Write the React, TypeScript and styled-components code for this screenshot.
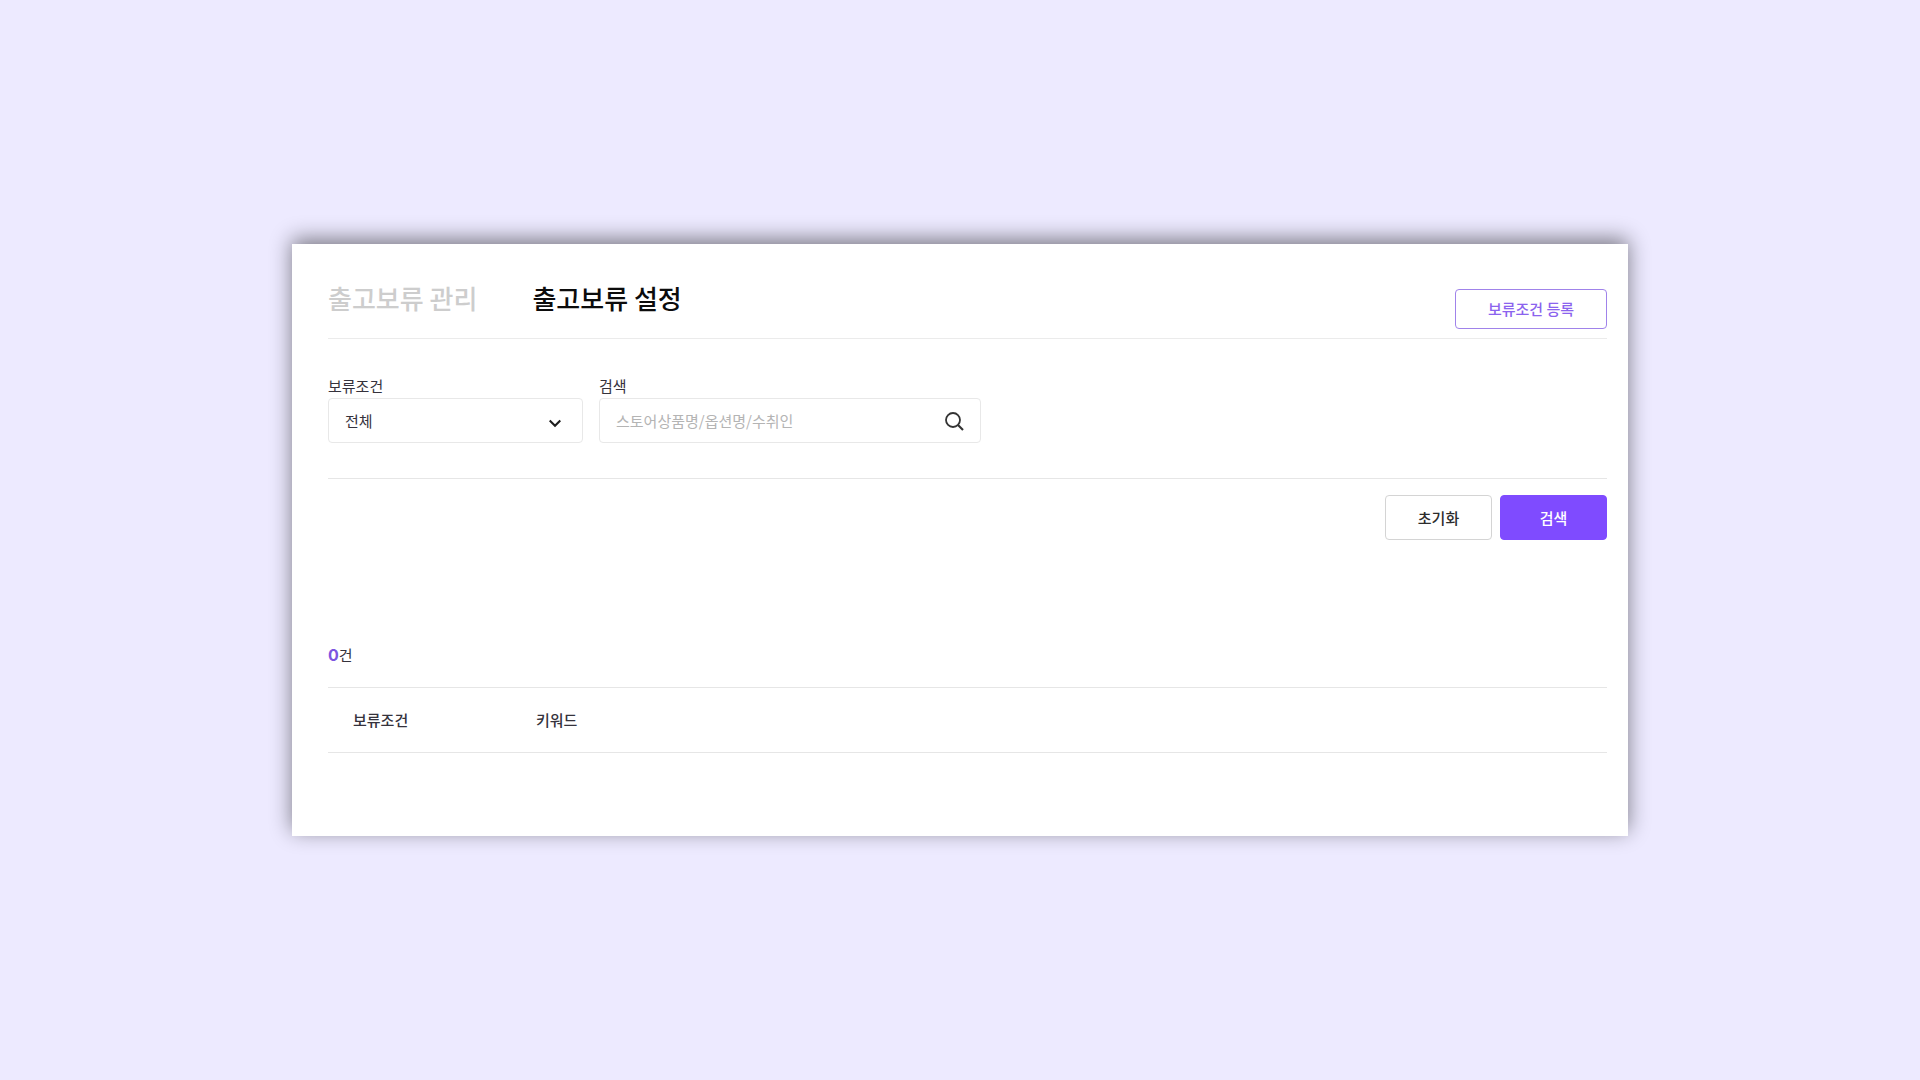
import React, { useState } from "react";
import styled, { createGlobalStyle } from "styled-components";

const GlobalStyle = createGlobalStyle`
  * {
    box-sizing: border-box;
  }
  body {
    margin: 0;
    background: #edeaff;
    color: #35323c;
    font-family: "Noto Sans CJK KR", "Noto Sans", sans-serif;
    font-size: 15px;
    line-height: 24px;
  }
  button, input, select {
    font: inherit;
    color: inherit;
  }
`;

const Page = styled.div`
  display: flex;
  align-items: center;
  justify-content: center;
  min-height: 100vh;
  padding: 24px;
`;

const Card = styled.main`
  width: 100%;
  max-width: 1336px;
  padding: 35px 21px 83px 36px;
  background: #fff;
  box-shadow: 0 -5px 20px rgba(0, 0, 0, 0.48);
`;

const Header = styled.header`
  display: flex;
  justify-content: space-between;
  align-items: flex-end;
  border-bottom: 1px solid #ebebeb;
`;

const Tabs = styled.nav`
  display: flex;
  gap: 55px;
  padding-bottom: 21px;
`;

const Tab = styled.a<{ $active?: boolean }>`
  color: ${({ $active }) => ($active ? "#0c0c0c" : "#cdcdcd")};
  font-size: 26px;
  font-weight: 500;
  line-height: 38px;
  text-decoration: none;
`;

const Button = styled.button<{ $kind?: "primary" | "plain" }>`
  width: 107px;
  height: 45px;
  padding: 0;
  border: 1px solid ${({ $kind }) => ($kind === "primary" ? "#7f4bff" : "#d4d4d4")};
  border-radius: 4px;
  background: ${({ $kind }) => ($kind === "primary" ? "#7f4bff" : "#fff")};
  color: ${({ $kind }) => ($kind === "primary" ? "#fff" : "#2c2c2c")};
  font-weight: 500;
  cursor: pointer;
`;

const OutlineButton = styled(Button)`
  width: 152px;
  height: 40px;
  margin-bottom: 9px;
  border-color: #a083ea;
  color: #8b63ee;
`;

const Filters = styled.div`
  display: flex;
  gap: 16px;
  padding: 35px 0;
  border-bottom: 1px solid #e6e6e6;
`;

const Field = styled.div<{ $width: number }>`
  display: flex;
  flex-direction: column;
  width: ${({ $width }) => $width}px;
`;

const SelectBox = styled.div`
  position: relative;
  height: 45px;

  svg {
    position: absolute;
    top: 21px;
    right: 22px;
    pointer-events: none;
  }
`;

const Select = styled.select`
  width: 100%;
  height: 100%;
  padding: 0 16px;
  border: 1px solid #e8e8e8;
  border-radius: 4px;
  background: #fff;
  appearance: none;
`;

const SearchBox = styled.div`
  display: flex;
  align-items: center;
  height: 45px;
  padding: 0 16px;
  border: 1px solid #e8e8e8;
  border-radius: 4px;
`;

const SearchInput = styled.input`
  flex: 1;
  min-width: 0;
  padding: 0;
  border: 0;
  outline: 0;
  background: transparent;

  &::placeholder {
    color: #b4b4b4;
    opacity: 1;
  }
`;

const IconButton = styled.button`
  display: flex;
  padding: 0;
  border: 0;
  background: none;
  cursor: pointer;
`;

const Actions = styled.div`
  display: flex;
  justify-content: flex-end;
  gap: 8px;
  padding-top: 16px;
`;

const Count = styled.p`
  margin: 103px 0 20px;

  strong {
    color: #7c55e0;
    font-family: Inter, "Noto Sans", sans-serif;
    font-size: 16px;
    font-weight: 700;
  }
`;

const Table = styled.table`
  width: 100%;
  border-collapse: collapse;
  table-layout: fixed;
  border-top: 1px solid #e6e6e6;
  border-bottom: 1px solid #e6e6e6;
`;

const Th = styled.th<{ $width?: number }>`
  width: ${({ $width }) => ($width ? `${$width}px` : "auto")};
  padding: 20px 0 20px 25px;
  font-weight: 500;
  text-align: left;
`;

function ChevronIcon() {
  return (
    <svg width="12" height="9" viewBox="0 0 12 9" fill="none" aria-hidden="true">
      <path d="M.7 1.5 6 6.8 11.3 1.5" stroke="#1e1e1e" strokeWidth="2.1" />
    </svg>
  );
}

function SearchIcon() {
  return (
    <svg width="20" height="20" viewBox="0 0 20 20" fill="none" aria-hidden="true">
      <circle cx="9" cy="9" r="7" stroke="#333" strokeWidth="1.8" />
      <path d="m14 14 5 5" stroke="#333" strokeWidth="2.1" />
    </svg>
  );
}

export default function App() {
  const [keyword, setKeyword] = useState("");

  return (
    <>
      <GlobalStyle />
      <Page>
        <Card>
          <Header>
            <Tabs>
              <Tab href="#manage">출고보류 관리</Tab>
              <Tab href="#settings" $active aria-current="page">
                출고보류 설정
              </Tab>
            </Tabs>
            <OutlineButton type="button">보류조건 등록</OutlineButton>
          </Header>
          <form onSubmit={(event) => event.preventDefault()}>
            <Filters>
              <Field $width={255}>
                <label htmlFor="condition">보류조건</label>
                <SelectBox>
                  <Select id="condition">
                    <option>전체</option>
                  </Select>
                  <ChevronIcon />
                </SelectBox>
              </Field>
              <Field $width={382}>
                <label htmlFor="keyword">검색</label>
                <SearchBox>
                  <SearchInput
                    id="keyword"
                    value={keyword}
                    onChange={(event) => setKeyword(event.target.value)}
                    placeholder="스토어상품명/옵션명/수취인"
                  />
                  <IconButton type="submit" aria-label="검색">
                    <SearchIcon />
                  </IconButton>
                </SearchBox>
              </Field>
            </Filters>
            <Actions>
              <Button type="button" $kind="plain" onClick={() => setKeyword("")}>
                초기화
              </Button>
              <Button type="submit" $kind="primary">
                검색
              </Button>
            </Actions>
          </form>
          <Count>
            <strong>0</strong>건
          </Count>
          <Table>
            <thead>
              <tr>
                <Th scope="col" $width={183}>
                  보류조건
                </Th>
                <Th scope="col">키워드</Th>
              </tr>
            </thead>
          </Table>
        </Card>
      </Page>
    </>
  );
}
